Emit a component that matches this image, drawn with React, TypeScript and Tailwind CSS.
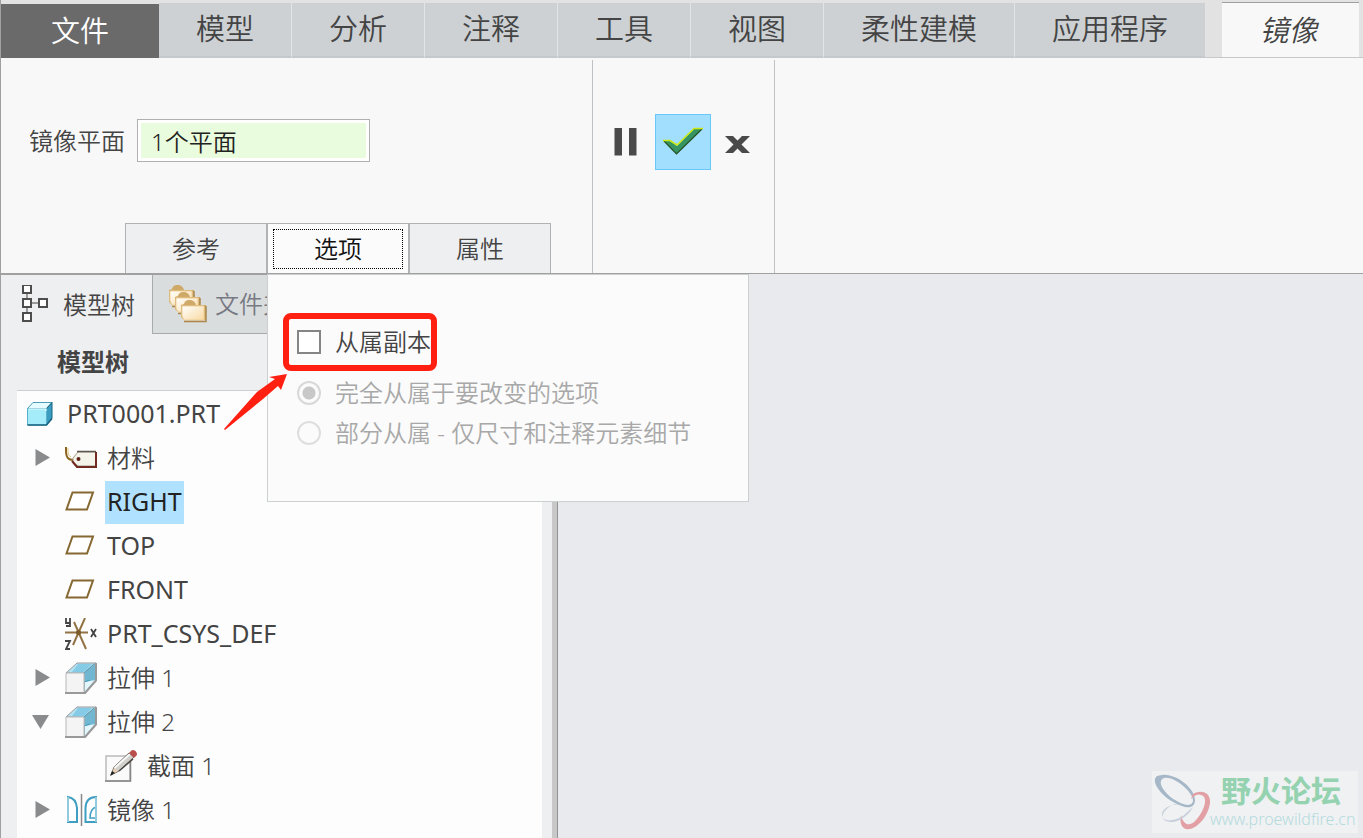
import { useState } from 'react';
import type { ReactNode } from 'react';

const ribbonTabs = ['模型', '分析', '注释', '工具', '视图', '柔性建模', '应用程序'];

interface TreeItem {
  label: string;
  icon: ReactNode;
  level: number;
  state?: 'open' | 'closed';
  selected?: boolean;
}

function TreeTabIcon() {
  return (
    <svg className="w-8 h-10 shrink-0" viewBox="0 0 32 40" fill="#fff" stroke="#4d4d4d" strokeWidth="2">
      <path d="M8 8v20M10 18h12" stroke="#999" />
      <rect x="4" y="0" width="8" height="8" />
      <rect x="4" y="14" width="8" height="8" />
      <rect x="4" y="28" width="8" height="8" />
      <rect x="20" y="14" width="8" height="8" />
    </svg>
  );
}

function FoldersIcon() {
  return (
    <svg className="w-10 h-10 shrink-0" viewBox="0 0 40 40">
      <defs>
        <linearGradient id="folder" x1="0" y1="0" x2="1" y2="1">
          <stop offset="0" stopColor="#fff" />
          <stop offset="1" stopColor="#f8d9a0" />
        </linearGradient>
      </defs>
      {[
        [2, 1],
        [8, 8],
        [14, 16],
      ].map(([x, y]) => (
        <g key={x} transform={`translate(${x} ${y})`}>
          <path d="M0 5L3 4Q4 0 8 0H10Q14 1 15 5H25V20H3L0 17Z" fill="#cfa968" />
          <path d="M1 6H23V20H3L1 16Z" fill="url(#folder)" stroke="#efcf98" />
          <path d="M3 21.500H25V6" fill="none" stroke="#ab874c" strokeWidth="1.500" />
        </g>
      ))}
    </svg>
  );
}

function PartIcon() {
  return (
    <svg className="w-8 h-8 shrink-0" viewBox="0 0 32 32" strokeLinejoin="round">
      <path d="M2.500 10.500L8 4.500H27L21.500 10.500Z" fill="#e4fbff" stroke="#4c9cb5" />
      <path d="M21.500 10.500L27 4.500V20L21.500 27Z" fill="#3a9dc1" stroke="#17637f" />
      <path d="M2.500 10.500H21.500V27H2.500Z" fill="#a5ecfb" stroke="#5ab0c9" />
      <path d="M3.500 11H21V13" fill="none" stroke="#e9fdff" />
      <path d="M2.500 27H21.500L27 20.500" fill="none" stroke="#17637f" strokeWidth="1.500" />
    </svg>
  );
}

function MaterialIcon() {
  return (
    <svg className="w-8 h-8 shrink-0" viewBox="0 0 32 32">
      <path d="M1 5V9Q1 15 4 17Q6 18 9 18" fill="none" stroke="#8a6420" strokeWidth="2" />
      <path d="M3 6V10Q3 14 6 15" fill="none" stroke="#e0c783" />
      <path d="M8 16L13 10H31V24H13L8 20Z" fill="#f5f4ea" stroke="#a79a88" />
      <path d="M12 9.500H31" stroke="#5b5550" strokeWidth="1.500" />
      <path d="M7 19L12 25H31V10" fill="none" stroke="#712b21" strokeWidth="2" />
      <circle cx="13.500" cy="17" r="2" fill="#5e2018" />
    </svg>
  );
}

function PlaneIcon() {
  return (
    <svg className="w-8 h-8 shrink-0" viewBox="0 0 32 32">
      <path d="M7.500 6.500H28L22 23.500H1.500Z" fill="#fff" stroke="#866832" strokeWidth="2" />
    </svg>
  );
}

function CsysIcon() {
  return (
    <svg className="w-8 h-8 shrink-0" viewBox="0 0 32 32" fill="none">
      <path d="M0 14.500H23M9 4L21 31M20 0L8 27" stroke="#927343" strokeWidth="2" />
      <circle cx="13.500" cy="14.500" r="2.500" fill="#7c5b2b" />
      <path
        d="M1 0V5H5M5 0V8H1M26 11L31 19M31 11L26 19M0 23H5L1 31H5"
        stroke="#444"
        strokeWidth="1.800"
      />
    </svg>
  );
}

function ExtrudeIcon() {
  return (
    <svg className="w-8 h-8 shrink-0" viewBox="0 0 32 32" strokeLinejoin="round">
      <path d="M1 11L12 1H31L19 11Z" fill="#b5e2f2" stroke="#999" />
      <path d="M7 10L13 2H27L18 11Z" fill="#85cbe5" />
      <path d="M19 11L31 1V18L19 31Z" fill="#72b7d2" stroke="#aaa" />
      <path d="M20 30V20L30 18Z" fill="#e2f6fc" />
      <path d="M19 11L29 2M19 20L25 18" stroke="#4a9cbb" />
      <path d="M1 11H19V31H1Z" fill="#f4f4f4" stroke="#b8b8b8" />
      <path d="M0 31H20L31 18.500V1" fill="none" stroke="#999" strokeWidth="2" />
    </svg>
  );
}

function SketchIcon() {
  return (
    <svg className="w-8 h-8 shrink-0" viewBox="0 0 32 32">
      <path d="M1 6H25V31H1Z" fill="#fafafa" stroke="#bbb" strokeWidth="1.500" />
      <path d="M0 31H25.500V6" fill="none" stroke="#858585" strokeWidth="1.500" />
      <path d="M6 25L9 17L24 3L29 7L14 21Z" fill="#d2d0cd" stroke="#68625c" />
      <path d="M9.500 18L25 4" stroke="#f7f7f7" strokeWidth="2" />
      <path d="M6 25L9 18L13 21Z" fill="#e6ceb2" />
      <path d="M5 26L7 21L10 23Z" fill="#222" />
      <path d="M24 3L27 0Q32 0 32 5L29 8Z" fill="#b94e4a" />
      <path d="M14 21L28 9" stroke="#4b4743" strokeWidth="1.500" />
    </svg>
  );
}

function MirrorIcon() {
  return (
    <svg className="w-8 h-8 shrink-0" viewBox="0 0 32 32" fill="none" stroke="#3f9fc2" strokeWidth="2">
      <path d="M3 3Q11 4 12 14V28H3Z" fill="#fff" />
      <path d="M31 3Q21 3 20.500 14V28H31Z" fill="#fff" />
      <path d="M31 13Q25 15 25 24H31Z" strokeWidth="1.500" />
      <path d="M3 3V28M31 3V28" stroke="#91cadd" />
      <path d="M16.500 0V32" stroke="#888" strokeWidth="1.500" />
    </svg>
  );
}

const treeItems: TreeItem[] = [
  { label: 'PRT0001.PRT', icon: <PartIcon />, level: 0 },
  { label: '材料', icon: <MaterialIcon />, level: 1, state: 'closed' },
  { label: 'RIGHT', icon: <PlaneIcon />, level: 1, selected: true },
  { label: 'TOP', icon: <PlaneIcon />, level: 1 },
  { label: 'FRONT', icon: <PlaneIcon />, level: 1 },
  { label: 'PRT_CSYS_DEF', icon: <CsysIcon />, level: 1 },
  { label: '拉伸 1', icon: <ExtrudeIcon />, level: 1, state: 'closed' },
  { label: '拉伸 2', icon: <ExtrudeIcon />, level: 1, state: 'open' },
  { label: '截面 1', icon: <SketchIcon />, level: 2 },
  { label: '镜像 1', icon: <MirrorIcon />, level: 1, state: 'closed' },
];

function TreeRow({ item }: { item: TreeItem }) {
  // Latin-only names run a touch larger than the Chinese ones
  const size = /^[\w.]+$/.test(item.label) ? 'text-[25px] font-normal' : 'text-2xl';
  const highlight = item.selected ? 'bg-[#b0e2ff] text-[#222]' : '';

  return (
    <li className="flex h-11 items-center">
      {item.level === 2 && <span className="w-10 shrink-0" />}
      {item.level > 0 && (
        <span className="flex w-10 shrink-0">
          {item.state && (
            <button type="button" aria-label={item.state === 'open' ? '折叠' : '展开'}>
              <svg className="w-8 h-8" viewBox="0 0 32 32" fill="#8a8b8d">
                <path d={item.state === 'open' ? 'M7 9H24L15.500 23Z' : 'M10.500 7V24L25 15.500Z'} />
              </svg>
            </button>
          )}
        </span>
      )}
      {item.icon}
      <span className={`ml-2 flex h-[43px] items-center px-0.5 ${size} ${highlight}`}>{item.label}</span>
    </li>
  );
}

function OptionsPanel() {
  const [dependent, setDependent] = useState(false);

  return (
    <div className="absolute left-0 top-[51px] z-10 h-[228px] w-[482px] border border-[#ccd0d1] bg-[#fbfbfb] pl-[29px] pt-[47px] text-[#444]">
      <label className="flex h-10 items-center gap-3.5">
        <input
          type="checkbox"
          checked={dependent}
          onChange={(e) => setDependent(e.target.checked)}
          className="h-6 w-6 appearance-none border-2 border-[#858585] bg-white checked:bg-[#4a4a4a]"
        />
        从属副本
      </label>
      <div className="mt-[11px] text-[#a8a8a8]">
        <label className="flex h-10 items-center gap-3.5">
          <input
            type="radio"
            name="dependency"
            defaultChecked
            disabled
            className="h-6 w-6 appearance-none rounded-full border-2 border-[#d8d8d8] bg-white bg-[radial-gradient(circle,#c8c8c8_6px,#fbfbfb_7px)]"
          />
          完全从属于要改变的选项
        </label>
        <label className="flex h-10 items-center gap-3.5">
          <input
            type="radio"
            name="dependency"
            disabled
            className="h-6 w-6 appearance-none rounded-full border-2 border-[#dedede] bg-[#fbfbfb]"
          />
          部分从属 - 仅尺寸和注释元素细节
        </label>
      </div>
      {/* callout around the checkbox */}
      <div className="pointer-events-none absolute left-[15px] top-[38px] h-[58px] w-[154px] rounded-lg border-6 border-[#ff2012]" />
      <svg
        className="pointer-events-none absolute -left-11 top-[98px] h-[58px] w-[65px]"
        viewBox="0 0 65 58"
        fill="#ff2012"
      >
        <path d="M0 56L33 19L51 6L45 4L63 1L57 17L54 13L39 26L1 57Z" />
      </svg>
    </div>
  );
}

function Ribbon() {
  return (
    <div className="flex border-b border-[#a0a0a0] bg-[#f8f8f8] pt-0.5">
      <div className="flex w-[592px] shrink-0 flex-col border-r border-[#c0c3c5] pt-[59px]">
        <div className="flex items-center gap-3 pl-7">
          <label htmlFor="plane">镜像平面</label>
          <div className="w-[233px] border border-[#b0b0b0] bg-white p-[3px]">
            <input
              id="plane"
              defaultValue="1个平面"
              className="block h-[35px] w-full bg-[#e9fcdd] pl-2.5 text-[#222] outline-none"
            />
          </div>
        </div>
        <div className="mt-[61px] flex pl-[124px]">
          <button type="button" className="h-[50px] w-[142px] border border-b-0 border-[#b0b2b3] bg-[#eeeff1]">
            参考
          </button>
          <div className="relative">
            <button
              type="button"
              className="block h-[50px] w-[142px] border border-b-0 border-[#b0b2b3] bg-[#fbfbfb] px-[5px] pb-1 pt-[5px] text-[#111]"
            >
              <span className="flex h-full items-center justify-center border border-dotted border-black">选项</span>
            </button>
            <OptionsPanel />
          </div>
          <button type="button" className="h-[50px] w-[142px] border border-b-0 border-[#b0b2b3] bg-[#eeeff1]">
            属性
          </button>
        </div>
      </div>
      <div className="flex w-[182px] shrink-0 gap-0.5 border-r border-[#c0c3c5] pl-1 pt-[54px]">
        <button type="button" aria-label="暂停" className="h-14 w-14">
          <svg className="h-14 w-14" viewBox="0 0 56 56" fill="#4a4a4a">
            <path d="M17.500 14H25V41.500H17.500ZM32 14H39.500V41.500H32Z" />
          </svg>
        </button>
        <button type="button" aria-label="确定" className="h-14 w-14 border border-[#68c8fa] bg-[#a2dfff]">
          <svg className="h-[54px] w-[54px]" viewBox="1 1 54 54">
            <path d="M9 27H15L22 32L39 15H47L21.500 40Z" fill="#369463" />
            <path d="M9 27L21.500 40L47 15" fill="none" stroke="#25511f" strokeWidth="1.200" />
            <path d="M8 26.500H15L22 31L39 14.500H48" fill="none" stroke="#cce913" strokeWidth="1.500" />
          </svg>
        </button>
        <button type="button" aria-label="取消" className="h-14 w-14">
          <svg className="h-14 w-14" viewBox="0 0 56 56" fill="#4a4a4a">
            <path d="M12 22H20L24.500 26.500L29 22H37L28.500 30.500L37 39H29L24.500 34.500L20 39H12L20.500 30.500Z" />
          </svg>
        </button>
      </div>
    </div>
  );
}

function Watermark() {
  return (
    <div className="absolute bottom-[5px] right-[5px] flex h-[62px] w-[206px] bg-[#eff1f3]">
      <svg className="h-[62px] w-[58px] shrink-0" viewBox="0 0 58 62" fillRule="evenodd">
        <path
          d="M10 4C24 2 44 18 43 30C42 39 32 37 23 32C9 25-2 10 5 5ZM12 7C4 10 12 22 23 29C32 35 41 36 41 29C40 20 22 5 12 7Z"
          fill="#a6b8c8"
        />
        <path
          d="M41 23C49 18 59 21 58 32C56 47 43 60 34 58C28 56 28 49 29 44C31 53 37 57 44 49C52 40 57 26 49 24C45 22 41 26 39 28Z"
          fill="#e2a0a5"
        />
        <path
          d="M31 34C20 32 10 37 10 44C11 52 23 50 31 45L41 36C36 46 23 54 14 50C6 46 14 36 23 33Z"
          fill="#c5cdd9"
        />
      </svg>
      <div className="flex flex-col whitespace-nowrap">
        <span className="h-10 pl-[11px] pt-[3px] font-['Liberation_Sans','Noto_Sans_CJK_SC',sans-serif] text-[30px] font-bold leading-9 text-[#94d2b0]">
          野火论坛
        </span>
        <span className="font-['Noto_Sans',sans-serif] text-base font-light leading-4 text-[#b5dbdd]">
          www.proewildfire.cn
        </span>
      </div>
    </div>
  );
}

export default function App() {
  return (
    <div className="flex min-h-screen flex-col border-l border-[#a0a0a0] bg-[#e8eaed] font-['Noto_Sans','Noto_Sans_CJK_SC',sans-serif] text-2xl font-[350] text-[#444]">
      <nav className="flex h-[58px] items-stretch bg-[#e2e2e2] pt-[3px] text-[29px]">
        <button type="button" className="mt-px w-[158px] shrink-0 bg-[#6a6a6a] text-white">
          文件
        </button>
        {ribbonTabs.map((tab) => (
          <button
            key={tab}
            type="button"
            className="shrink-0 border-b-2 border-r border-b-[#c5c9cc] border-r-[#e2e4e5] bg-[#cdd1d4] px-[37px]"
          >
            {tab}
          </button>
        ))}
        <div className="flex flex-1 border-b border-[#c5c9cc] pl-4">
          <button
            type="button"
            className="-mt-px w-[137px] shrink-0 border-t border-[#a0a0a0] bg-[#f8f8f8] pr-1 italic"
          >
            镜像
          </button>
        </div>
      </nav>

      <Ribbon />

      <main className="flex flex-1">
        <aside className="flex w-[551px] shrink-0 flex-col bg-[#eeeff1]">
          <div className="flex border-t border-[#a0a0a0]">
            <button type="button" className="flex h-[59px] w-[151px] items-center gap-3 pl-[18px]">
              <TreeTabIcon />
              <span className="whitespace-nowrap">模型树</span>
            </button>
            <button
              type="button"
              className="flex h-[59px] items-center gap-2 border-b border-l border-[#a8abac] bg-[#dadddd] px-3.5 text-[#777983]"
            >
              <FoldersIcon />
              文件夹
            </button>
          </div>
          <h2 className="flex h-14 items-center pl-14 font-bold">模型树</h2>
          <ul className="ml-4 mr-2.5 flex-1 border-t border-[#ccd0d2] bg-[#fdfdfd] pl-2 pt-px">
            {treeItems.map((item) => (
              <TreeRow key={item.label} item={item} />
            ))}
          </ul>
        </aside>
        <div className="w-1.5 shrink-0 border-r border-[#929292] bg-[#c8c8c8]" />
        <section className="relative flex-1">
          <Watermark />
        </section>
      </main>
    </div>
  );
}
